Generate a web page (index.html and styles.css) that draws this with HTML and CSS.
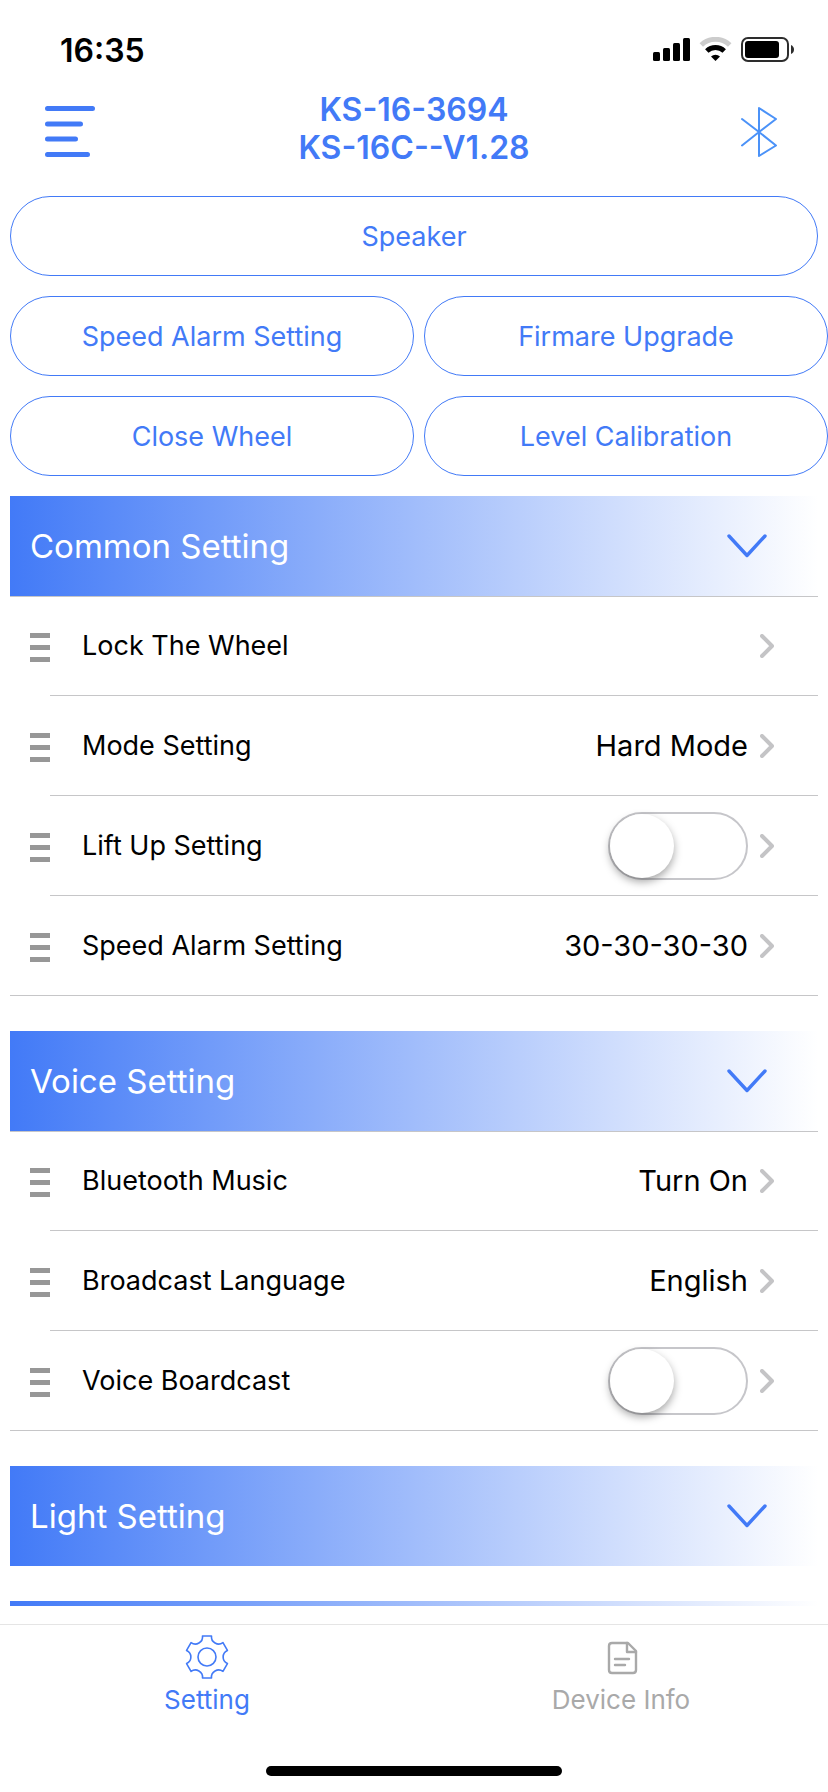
FILE: index.html
```html
<!DOCTYPE html>
<html lang="en">
<head>
  <meta charset="UTF-8">
  <meta name="viewport" content="width=device-width, initial-scale=1">
  <title>KS-16-3694</title>
  <link rel="stylesheet" href="styles.css">
</head>
<body>
  <!-- shared icons -->
  <svg class="sprite" aria-hidden="true">
    <symbol id="icon-down" viewBox="0 0 40 24">
      <path d="M2 2 L20 21.500 L38 2" fill="none" stroke="#427af7" stroke-width="3.400" stroke-linecap="round" stroke-linejoin="round"/>
    </symbol>
    <symbol id="icon-next" viewBox="0 0 14 24">
      <path d="M2 2 L12 12 L2 22" fill="none" stroke="#c4c4c6" stroke-width="4" stroke-linecap="round" stroke-linejoin="round"/>
    </symbol>
    <symbol id="icon-handle" viewBox="0 0 20 32">
      <path d="M0 3h20v5H0zM0 15h20v5H0zM0 27h20v5H0z" fill="#979797"/>
    </symbol>
  </svg>

  <div class="app">
    <div class="status-bar">
      <span class="time">16:35</span>
      <svg class="status-icons" viewBox="0 0 142 26" aria-hidden="true">
        <rect x="0" y="15" width="7" height="9" rx="1.500"/>
        <rect x="10" y="11" width="7" height="13" rx="1.500"/>
        <rect x="20" y="6" width="7" height="18" rx="1.500"/>
        <rect x="30" y="1" width="7" height="23" rx="1.500"/>
        <path d="M48.300 8 A20.500 20.500 0 0 1 76.700 8" fill="none" stroke="#ccc" stroke-width="5"/>
        <path d="M53.800 14 A12.800 12.800 0 0 1 71.200 14" fill="none" stroke="#000" stroke-width="5"/>
        <path d="M58 19.500 A6.500 6.500 0 0 1 67 19.500 L62.500 24 Z"/>
        <rect x="89" y="1" width="46" height="23" rx="6" fill="none" stroke="#2d2d2d" stroke-width="2"/>
        <rect x="92" y="4" width="34" height="17" rx="3"/>
        <path d="M138 8 Q141 9.500 141 12.500 T138 17 Z" fill="#2d2d2d"/>
      </svg>
    </div>

    <header class="nav-bar">
      <button class="icon-button" aria-label="Menu">
        <svg width="50" height="52" viewBox="0 0 50 52">
          <path d="M2.500 2.500h45M2.500 18h33M2.500 33h28M2.500 48.500h40" stroke="#427af7" stroke-width="5" stroke-linecap="round"/>
        </svg>
      </button>
      <h1 class="title">KS-16-3694<br>KS-16C--V1.28</h1>
      <button class="icon-button bluetooth" aria-label="Bluetooth">
        <svg width="38" height="52" viewBox="0 0 38 52">
          <path d="M2 13 L19 26 L36 39.500 L19 50 V2 L36 13 L19 26 L2 39.500" fill="none" stroke="#4b92f8" stroke-width="2" stroke-linecap="round" stroke-linejoin="round"/>
        </svg>
      </button>
    </header>

    <main class="content">
      <div class="actions">
        <button class="pill wide">Speaker</button>
        <button class="pill">Speed Alarm Setting</button>
        <button class="pill">Firmare Upgrade</button>
        <button class="pill">Close Wheel</button>
        <button class="pill">Level Calibration</button>
      </div>

      <section class="group">
        <button class="group-head">Common Setting <svg class="down"><use href="#icon-down"/></svg></button>
        <ul class="rows">
          <li class="row">
            <svg class="handle"><use href="#icon-handle"/></svg>
            <div class="row-body">
              <span class="label">Lock The Wheel</span>
              <svg class="next"><use href="#icon-next"/></svg>
            </div>
          </li>
          <li class="row">
            <svg class="handle"><use href="#icon-handle"/></svg>
            <div class="row-body">
              <span class="label">Mode Setting</span>
              <span class="value">Hard Mode</span>
              <svg class="next"><use href="#icon-next"/></svg>
            </div>
          </li>
          <li class="row">
            <svg class="handle"><use href="#icon-handle"/></svg>
            <div class="row-body">
              <label class="label" for="lift-up">Lift Up Setting</label>
              <input class="switch" type="checkbox" id="lift-up">
              <svg class="next"><use href="#icon-next"/></svg>
            </div>
          </li>
          <li class="row">
            <svg class="handle"><use href="#icon-handle"/></svg>
            <div class="row-body">
              <span class="label">Speed Alarm Setting</span>
              <span class="value">30-30-30-30</span>
              <svg class="next"><use href="#icon-next"/></svg>
            </div>
          </li>
        </ul>
      </section>

      <section class="group">
        <button class="group-head">Voice Setting <svg class="down"><use href="#icon-down"/></svg></button>
        <ul class="rows">
          <li class="row">
            <svg class="handle"><use href="#icon-handle"/></svg>
            <div class="row-body">
              <span class="label">Bluetooth Music</span>
              <span class="value">Turn On</span>
              <svg class="next"><use href="#icon-next"/></svg>
            </div>
          </li>
          <li class="row">
            <svg class="handle"><use href="#icon-handle"/></svg>
            <div class="row-body">
              <span class="label">Broadcast Language</span>
              <span class="value">English</span>
              <svg class="next"><use href="#icon-next"/></svg>
            </div>
          </li>
          <li class="row">
            <svg class="handle"><use href="#icon-handle"/></svg>
            <div class="row-body">
              <label class="label" for="voice">Voice Boardcast</label>
              <input class="switch" type="checkbox" id="voice">
              <svg class="next"><use href="#icon-next"/></svg>
            </div>
          </li>
        </ul>
      </section>

      <section class="group">
        <button class="group-head">Light Setting <svg class="down"><use href="#icon-down"/></svg></button>
      </section>

      <div class="group-edge"></div>
    </main>

    <nav class="tab-bar">
      <a class="tab active" href="#setting">
        <svg class="tab-icon" viewBox="-22 -22 44 44">
          <g fill="none" stroke="currentColor" stroke-width="1.600" stroke-linejoin="round">
            <path d="M-4.500 -21 H4.500 A7.200 7.200 0 0 0 15.940 -14.400 L20.440 -6.600 A7.200 7.200 0 0 0 20.440 6.600 L15.940 14.400 A7.200 7.200 0 0 0 4.500 21 H-4.500 A7.200 7.200 0 0 0 -15.940 14.400 L-20.440 6.600 A7.200 7.200 0 0 0 -20.440 -6.600 L-15.940 -14.400 A7.200 7.200 0 0 0 -4.500 -21 Z"/>
            <circle r="9"/>
          </g>
        </svg>
        Setting
      </a>
      <a class="tab" href="#device">
        <svg class="tab-icon" viewBox="0 0 44 44">
          <g fill="none" stroke="currentColor" stroke-width="2.400" stroke-linecap="round" stroke-linejoin="round">
            <path d="M29 8 H13 Q10 8 10 11 V35 Q10 38 13 38 H34 Q37 38 37 35 V16 Z"/>
            <path d="M28 8 V17 H37"/>
            <path d="M16 24 H30 M16 30 H26"/>
          </g>
        </svg>
        Device Info
      </a>
      <div class="home-bar"></div>
    </nav>
  </div>
</body>
</html>
```
FILE: styles.css
```css
:root {
  --blue: #427af7;
  --line: #c6c6c8;
  --grey: #a9a9a9;
}
* { box-sizing: border-box; }
body {
  margin: 0;
  font-family: Inter, 'Liberation Sans', sans-serif;
  background: #fff;
  color: #000;
}
button {
  font-family: inherit;
  border: none;
  background: none;
  cursor: pointer;
}
svg { display: block; }
.sprite {
  position: absolute;
  width: 0;
  height: 0;
}
.app {
  display: flex;
  flex-direction: column;
  height: 100vh;
}

/* top of the screen */
.status-bar {
  display: flex;
  justify-content: space-between;
  align-items: center;
  height: 88px;
  padding: 12px 33px 0 60px;
}
.time {
  font-size: 32px;
  font-weight: 600;
}
.status-icons {
  width: 142px;
  height: 26px;
}
.nav-bar {
  display: grid;
  grid-template-columns: 100px 1fr 100px;
  align-items: center;
  height: 88px;
  padding: 0 45px;
}
.icon-button {
  padding: 0;
  justify-self: start;
}
.bluetooth {
  justify-self: end;
  margin-right: 5px;
}
.title {
  margin: 0;
  padding-bottom: 6px;
  text-align: center;
  font-size: 32px;
  line-height: 38px;
  font-weight: 600;
  color: var(--blue);
}

/* scrolling part */
.content {
  flex: 1;
  min-height: 0;
  margin-bottom: 18px;
  padding: 20px 0 0 10px;
  overflow-y: auto;
  scrollbar-width: none;
}
.actions {
  display: grid;
  grid-template-columns: 1fr 1fr;
  gap: 20px 10px;
  margin-bottom: 20px;
}
.pill {
  height: 80px;
  border: 1px solid var(--blue);
  border-radius: 40px;
  font-size: 27px;
  color: var(--blue);
}
.wide {
  grid-column: 1 / 3;
  margin-right: 10px;
}
.group {
  margin: 0 10px 35px 0;
}
.group-head {
  display: flex;
  justify-content: space-between;
  align-items: center;
  width: 100%;
  height: 100px;
  padding: 0 51px 0 20px;
  background: linear-gradient(to right, var(--blue), #fff);
  font-size: 33px;
  color: #fff;
}
.group-edge {
  height: 100px;
  margin-right: 10px;
  background: linear-gradient(to right, var(--blue), #fff);
}
.down {
  width: 40px;
  height: 24px;
}
.rows {
  margin: 0;
  padding: 0;
  list-style: none;
  border-bottom: 1px solid var(--line);
  box-shadow: inset 0 1px var(--line);
}
.row {
  display: flex;
  align-items: center;
  padding-left: 20px;
}
.handle {
  width: 20px;
  height: 32px;
}
.row-body {
  flex: 1;
  display: flex;
  align-items: center;
  gap: 12px;
  height: 100px;
  padding: 0 44px 0 32px;
  border-bottom: 1px solid var(--line);
}
.row:last-child .row-body {
  height: 99px;
  border-bottom: none;
}
.label {
  flex: 1;
  font-size: 27px;
}
.value { font-size: 29px; }
.next {
  width: 14px;
  height: 24px;
}
.switch {
  appearance: none;
  width: 140px;
  height: 68px;
  margin: 0;
  border: 2px solid #c6c6ca;
  border-radius: 34px;
  cursor: pointer;
}
.switch::before {
  content: '';
  display: block;
  width: 64px;
  height: 64px;
  border-radius: 50%;
  background: #fff;
  box-shadow: 0 4px 8px rgba(0, 0, 0, 0.35);
}
.switch:checked { background: var(--blue); }
.switch:checked::before { margin-left: 72px; }

/* bottom tabs */
.tab-bar {
  display: grid;
  grid-template-columns: 1fr 1fr;
  align-content: space-between;
  height: 168px;
  padding: 10px 0 16px;
  border-top: 1px solid #e5e5e5;
}
.tab {
  display: flex;
  flex-direction: column;
  align-items: center;
  gap: 5px;
  font-size: 26px;
  line-height: 32px;
  color: var(--grey);
  text-decoration: none;
}
.active { color: var(--blue); }
.tab-icon {
  width: 44px;
  height: 44px;
}
.home-bar {
  grid-column: 1 / 3;
  justify-self: center;
  width: 296px;
  height: 10px;
  border-radius: 5px;
  background: #000;
}
```
